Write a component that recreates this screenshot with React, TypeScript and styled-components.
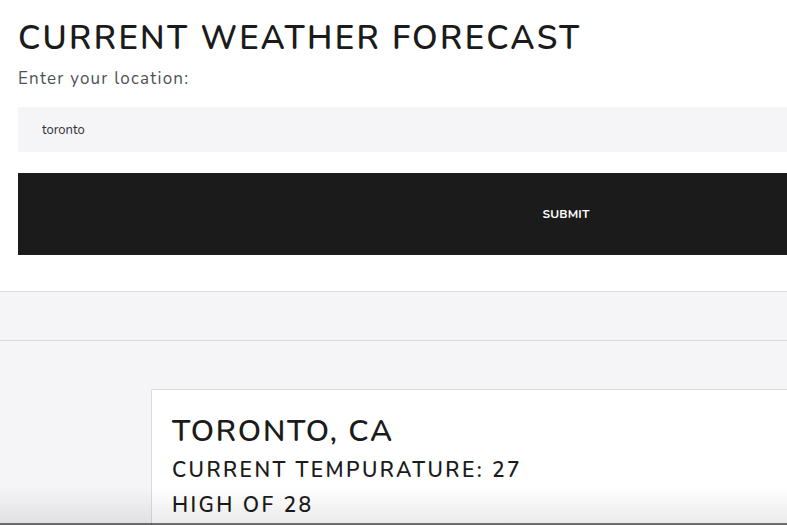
import React from "react";
import styled, { createGlobalStyle } from "styled-components";

const Global = createGlobalStyle`
  html, body { margin: 0; padding: 0; background: #f5f5f7; overflow: hidden; }
  body { font-family: "Nunito", "Noto Sans", "Open Sans", sans-serif; color: #1a1a1a; }
  #root { width: 787px; height: 525px; overflow: hidden; }
`;

const Page = styled.div`
  width: 787px;
  height: 525px;
  overflow: hidden;
  display: flex;
  flex-direction: column;
  background: #f5f5f7;
`;

const Header = styled.section`
  background: #fff;
  padding: 18px 0 0 18px;
  height: 273px;
  border-bottom: 1px solid #dcdcdc;
  flex-shrink: 0;
`;

const Title = styled.h1`
  margin: 0;
  font-size: 33px;
  font-weight: 600;
  letter-spacing: 2.3px;
  line-height: 42px;
  white-space: nowrap;
  color: #1b1b1b;
`;

const Label = styled.label`
  display: block;
  margin-top: 8px;
  font-size: 17px;
  letter-spacing: 1.2px;
  color: #4d5156;
  line-height: 22px;
`;

const Form = styled.form`
  width: 1096px;
  margin-top: 17px;
  display: flex;
  flex-direction: column;
  gap: 21px;
`;

const Input = styled.input`
  box-sizing: border-box;
  width: 100%;
  height: 45px;
  border: none;
  outline: none;
  background: #f5f5f7;
  padding: 0 24px;
  font-family: inherit;
  font-size: 13px;
  color: #333;
`;

const Button = styled.button`
  width: 100%;
  height: 82px;
  border: none;
  background: #1b1b1b;
  color: #fff;
  font-family: inherit;
  font-size: 12px;
  font-weight: 700;
  letter-spacing: 0.2px;
  padding: 0;
`;

const Band = styled.div`
  height: 48px;
  flex-shrink: 0;
  border-bottom: 1px solid #dcdcdc;
  background: #f5f5f7;
`;

const Main = styled.main`
  flex: 1;
  padding: 48px 0 0 151px;
  background: #f5f5f7;
`;

const Card = styled.div`
  width: 900px;
  min-height: 200px;
  background: #fff;
  border: 1px solid #dcdcdc;
  padding: 22px 0 0 20px;
  box-sizing: border-box;
`;

const City = styled.h2`
  margin: 0;
  font-size: 30px;
  font-weight: 600;
  letter-spacing: 1.8px;
  line-height: 40px;
  color: #1b1b1b;
`;

const Stat = styled.p`
  margin: 1px 0 0;
  font-size: 21px;
  font-weight: 600;
  letter-spacing: 2.4px;
  line-height: 34px;
  color: #1b1b1b;
`;

const BottomShade = styled.div`
  position: fixed;
  left: 0;
  right: 0;
  bottom: 0;
  height: 36px;
  background: linear-gradient(to bottom, rgba(238,238,238,0) 0%, #ececec 94%);
  mix-blend-mode: multiply;
  border-bottom: 2px solid #6e6e6e;
  pointer-events: none;
`;

export default function App() {
  return (
    <Page>
      <Global />
      <Header>
        <Title>CURRENT WEATHER FORECAST</Title>
        <Label htmlFor="loc">Enter your location:</Label>
        <Form onSubmit={(e) => e.preventDefault()}>
          <Input id="loc" defaultValue="toronto" />
          <Button type="submit">SUBMIT</Button>
        </Form>
      </Header>
      <Band />
      <Main>
        <Card>
          <City>TORONTO, CA</City>
          <Stat>CURRENT TEMPURATURE: 27</Stat>
          <Stat>HIGH OF 28</Stat>
        </Card>
      </Main>
      <BottomShade />
    </Page>
  );
}
